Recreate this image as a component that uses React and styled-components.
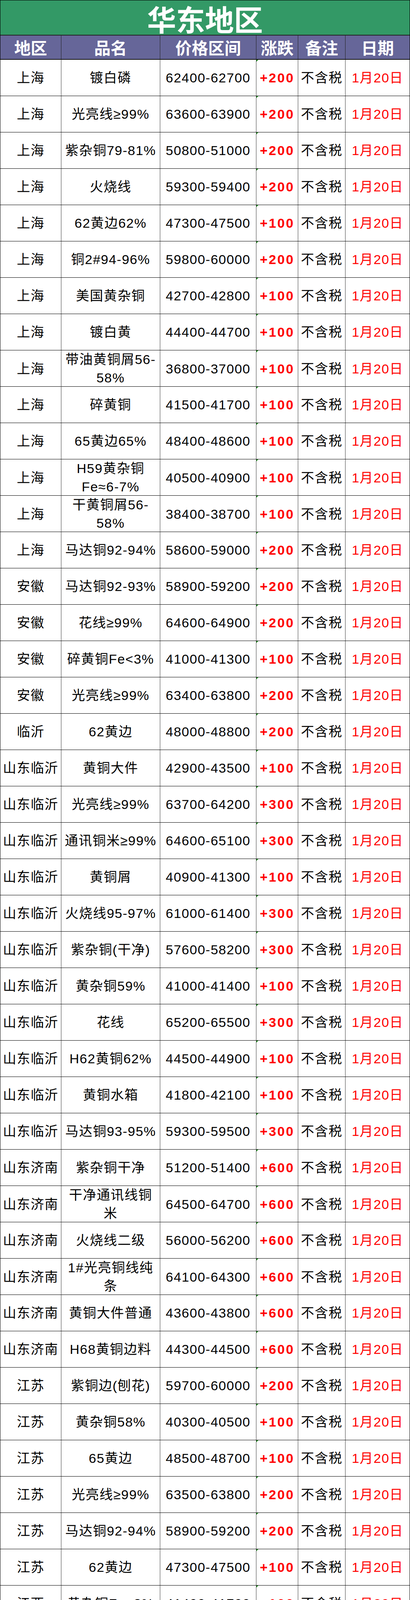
import React from 'react'
import styled, { createGlobalStyle, css } from 'styled-components'

const GlobalStyle = createGlobalStyle`
  html, body {
    margin: 0;
    padding: 0;
    background: #fff;
  }
  body {
    font-family: "Liberation Sans", "Noto Sans CJK SC", sans-serif;
    color: #000;
  }
`

// column widths, inside the 1px outer frame (1047 in total)
const COLS = '156px 253px 246px 107px 121px 164px'

const Sheet = styled.div`
  width: 1049px;
  box-sizing: border-box;
  border: 1px solid #000;
  border-bottom: none;
`

const Title = styled.div`
  height: 90px;
  box-sizing: border-box;
  background: #339966;
  border-bottom: 2px solid #222;
  display: flex;
  align-items: center;
  justify-content: center;
  padding-top: 3px;
  color: #fff;
  font-family: "Noto Sans CJK SC", sans-serif;
  font-weight: 700;
  font-size: 74px;
  line-height: 1;
`

const Head = styled.div`
  display: grid;
  grid-template-columns: ${COLS};
  height: 62px;
  box-sizing: border-box;
  background: #666699;
  border-bottom: 2px solid #111;
`

const HeadCell = styled.div`
  display: flex;
  align-items: center;
  justify-content: center;
  color: #fff;
  font-family: "Noto Sans CJK SC", sans-serif;
  font-weight: 700;
  font-size: 42px;
  line-height: 1;
  border-right: 1px solid #222;
  &:last-child {
    border-right: none;
  }
`

const Row = styled.div`
  display: grid;
  grid-template-columns: ${COLS};
  height: ${p => p.$h}px;
  box-sizing: border-box;
  border-bottom: 1px solid #000;
`

// little green marker excel puts on numbers stored as text
const tick = css`
  &::before {
    content: '';
    position: absolute;
    top: 0;
    left: 0;
    border-top: 5px solid #1f8a1f;
    border-right: 5px solid transparent;
  }
`

const Cell = styled.div`
  position: relative;
  display: flex;
  align-items: center;
  justify-content: center;
  text-align: center;
  white-space: pre;
  font-size: 34px;
  line-height: 47px;
  letter-spacing: ${p => (p.$bold ? 3 : 1.5)}px;
  color: ${p => (p.$red ? '#ff0000' : '#000')};
  font-weight: ${p => (p.$bold ? 700 : 400)};
  border-right: 1px solid #3a3a3a;
  &:last-child {
    border-right: none;
  }
  ${p => p.$tick && tick}
`

const rows = [
  ['上海', '镀白磷', '62400-62700', '+200'],
  ['上海', '光亮线≥99%', '63600-63900', '+200'],
  ['上海', '紫杂铜79-81%', '50800-51000', '+200'],
  ['上海', '火烧线', '59300-59400', '+200'],
  ['上海', '62黄边62%', '47300-47500', '+100'],
  ['上海', '铜2#94-96%', '59800-60000', '+200'],
  ['上海', '美国黄杂铜', '42700-42800', '+100'],
  ['上海', '镀白黄', '44400-44700', '+100'],
  ['上海', '带油黄铜屑56-\n58%', '36800-37000', '+100'],
  ['上海', '碎黄铜', '41500-41700', '+100'],
  ['上海', '65黄边65%', '48400-48600', '+100'],
  ['上海', 'H59黄杂铜\nFe≈6-7%', '40500-40900', '+100'],
  ['上海', '干黄铜屑56-\n58%', '38400-38700', '+100'],
  ['上海', '马达铜92-94%', '58600-59000', '+200'],
  ['安徽', '马达铜92-93%', '58900-59200', '+200'],
  ['安徽', '花线≥99%', '64600-64900', '+200'],
  ['安徽', '碎黄铜Fe<3%', '41000-41300', '+100'],
  ['安徽', '光亮线≥99%', '63400-63800', '+200'],
  ['临沂', '62黄边', '48000-48800', '+200'],
  ['山东临沂', '黄铜大件', '42900-43500', '+100'],
  ['山东临沂', '光亮线≥99%', '63700-64200', '+300'],
  ['山东临沂', '通讯铜米≥99%', '64600-65100', '+300'],
  ['山东临沂', '黄铜屑', '40900-41300', '+100'],
  ['山东临沂', '火烧线95-97%', '61000-61400', '+300'],
  ['山东临沂', '紫杂铜(干净)', '57600-58200', '+300'],
  ['山东临沂', '黄杂铜59%', '41000-41400', '+100'],
  ['山东临沂', '花线', '65200-65500', '+300'],
  ['山东临沂', 'H62黄铜62%', '44500-44900', '+100'],
  ['山东临沂', '黄铜水箱', '41800-42100', '+100'],
  ['山东临沂', '马达铜93-95%', '59300-59500', '+300'],
  ['山东济南', '紫杂铜干净', '51200-51400', '+600'],
  ['山东济南', '干净通讯线铜\n米', '64500-64700', '+600'],
  ['山东济南', '火烧线二级', '56000-56200', '+600'],
  ['山东济南', '1#光亮铜线纯\n条', '64100-64300', '+600'],
  ['山东济南', '黄铜大件普通', '43600-43800', '+600'],
  ['山东济南', 'H68黄铜边料', '44300-44500', '+600'],
  ['江苏', '紫铜边(刨花)', '59700-60000', '+200'],
  ['江苏', '黄杂铜58%', '40300-40500', '+100'],
  ['江苏', '65黄边', '48500-48700', '+100'],
  ['江苏', '光亮线≥99%', '63500-63800', '+200'],
  ['江苏', '马达铜92-94%', '58900-59200', '+200'],
  ['江苏', '62黄边', '47300-47500', '+100'],
  ['江西', '黄杂铜Fe<3%', '41400-41700', '+100'],
  ['江西', '马达铜93-94%', '58800-59200', '+200'],
  ['江西', '光亮线≥99%', '63800-64200', '+200'],
  ['江西保太', '皮线铜米', '65300', '+300'],
  ['江西保太', '1#铜管', '63300', '+200'],
  ['江西保太', '光亮铜', '64700', '+300'],
  ['江西保太', '紫杂铜', '49000', '+200'],
  ['江西保太', '黄杂铜', '42900', '+200'],
  ['江西保太', '铜米', '65100', '+300'],
  ['浙江', '火烧线97-98%', '61600-61800', '+200'],
  ['浙江', '铜2#94-96%', '59700-60200', '+200'],
  ['浙江', '带铁铜铝水箱\nCu≈48%\nAl≈44%\nfe≈6%', '35200-35400', '+100', 196],
  ['浙江', '62黄边62%', '47300-47500', '+100'],
  ['浙江', '变压器铜95%', '59500-59800', '+200'],
  ['浙江', '黄杂铜59%', '40700-41000', '+100'],
  ['浙江', '铜铝水箱\nCu≈48%\nAl≈50%', '37300-37500', '+100', 147],
  ['浙江', '65黄边65%', '48500-48700', '+100'],
  ['浙江', '干净水箱紫铜\n管', '62400-62700', '+200'],
  ['浙江', '马达铜92-94%', '58700-59200', '+200'],
  ['浙江', 'B30白铜\nCu67%\nNi/Co28%-\n32%', '68400-69400', '+250\n0', 196],
  ['浙江', '光亮线', '63500-63800', '+200'],
  ['福建', '光亮线≥99%', '63700-64000', '+200'],
  ['福建', '马达铜91-93%', '58900-59200', '+200'],
  ['福建', '黄杂铜59%', '40500-40800', '+100'],
]

const headers = ['地区', '品名', '价格区间', '涨跌', '备注', '日期']

export default function App() {
  return (
    <>
      <GlobalStyle />
      <Sheet>
        <Title>华东地区</Title>
        <Head>
          {headers.map(h => <HeadCell key={h}>{h}</HeadCell>)}
        </Head>
        {rows.map(([area, name, price, change, h], i) => (
          <Row key={i} $h={h || 93}>
            <Cell>{area}</Cell>
            <Cell>{name}</Cell>
            <Cell $tick={!price.includes('-')}>{price}</Cell>
            <Cell $tick $red $bold>{change}</Cell>
            <Cell>不含税</Cell>
            <Cell $red>1月20日</Cell>
          </Row>
        ))}
      </Sheet>
    </>
  )
}
